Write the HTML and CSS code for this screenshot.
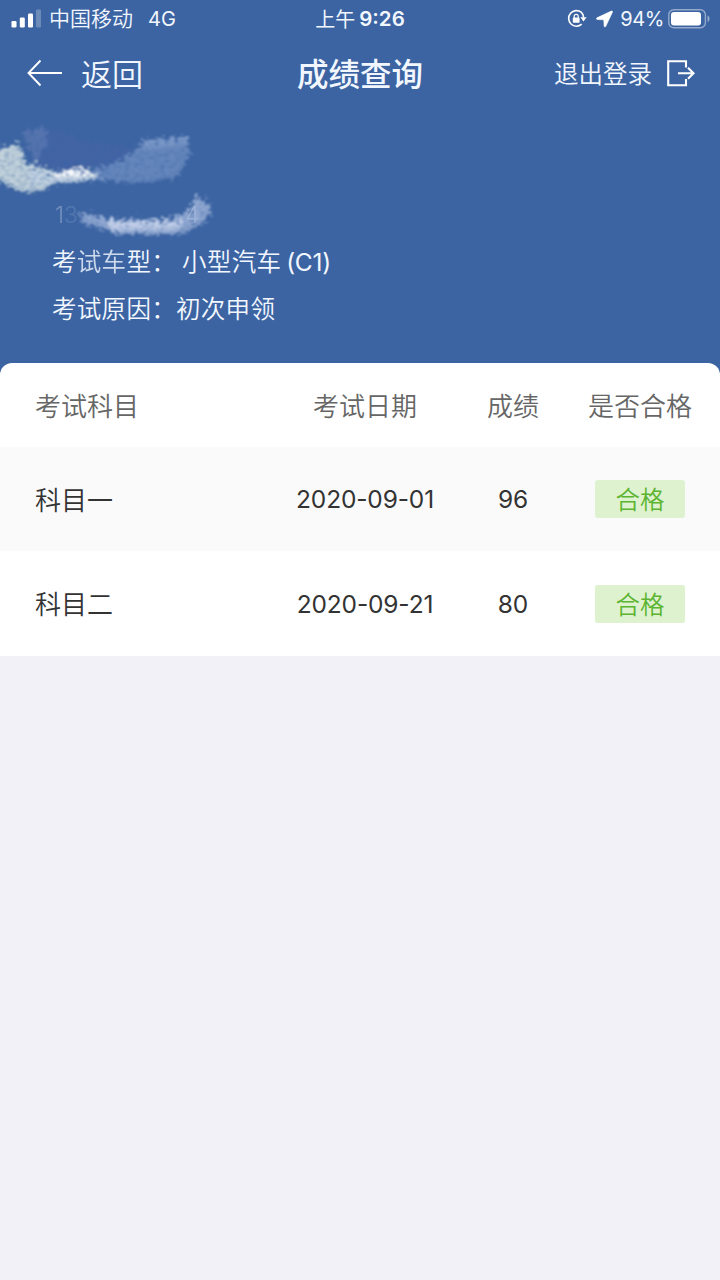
FILE: index.html
```html
<!DOCTYPE html>
<html lang="zh-CN">
<head>
    <meta charset="UTF-8">
    <meta name="viewport" content="width=device-width, initial-scale=1.0">
    <title>成绩查询</title>
    <link rel="stylesheet" href="styles.css">
</head>
<body>
    <header class="top">
        <div class="status-bar">
            <div class="status-left">
                <svg class="signal" width="30" height="19" viewBox="0 0 30 19">
                    <rect x="0.5" y="12" width="5" height="6.5" rx="1.2"/>
                    <rect x="8.8" y="8.5" width="5" height="10" rx="1.2"/>
                    <rect x="17" y="4.5" width="5" height="14" rx="1.2"/>
                    <rect x="25" y="0.5" width="5" height="18" rx="1.2" opacity="0.25"/>
                </svg>
                <span class="carrier">中国移动</span>
                <span class="network">4G</span>
            </div>
            <div class="clock"><span>上午</span><b>9:26</b></div>
            <div class="status-right">
                <!-- rotation lock -->
                <svg class="lock" width="20" height="20" viewBox="0 0 20 20">
                    <path d="M14.2 3.2A7.8 7.8 0 1 0 14.7 15.2M16.6 8.5A7.8 7.8 0 0 0 14.2 3.2" fill="none" stroke="#fff" stroke-width="1.6"/>
                    <path d="M13.4 8.2h6.2l-3.1 4.2z"/>
                    <rect x="5.8" y="8.6" width="6.8" height="5.2" rx="0.8"/>
                    <path d="M7.2 9V7.4a2 2 0 0 1 4 0V9" fill="none" stroke="#fff" stroke-width="1.2"/>
                </svg>
                <svg class="location" width="17" height="18" viewBox="0 0 17 18">
                    <path d="M15.3 1.1L1 7.8c-.9.4-.7 1.7.3 1.7l6.5.3.3 6.2c0 1.1 1.3 1.3 1.7.3L16.5 2c.3-.7-.5-1.2-1.2-.9z" stroke="#fff" stroke-width="0.6"/>
                </svg>
                <span class="percent">94%</span>
                <svg class="battery" width="43" height="20" viewBox="0 0 43 20">
                    <rect x="0.8" y="0.8" width="36.6" height="18" rx="5" fill="none" stroke="#fff" stroke-opacity="0.45" stroke-width="1.4"/>
                    <rect x="3" y="3" width="30" height="13.6" rx="3"/>
                    <path d="M39.5 6.5c2.8 1 2.8 5.6 0 6.6z" opacity="0.45"/>
                </svg>
            </div>
        </div>

        <nav class="nav-bar">
            <a href="#" class="back">
                <svg width="36" height="28" viewBox="0 0 36 28">
                    <path d="M13.5 1.5L1.5 14l12 12.5M1.5 14H35" fill="none" stroke="#fff" stroke-width="1.9"/>
                </svg>
                <span>返回</span>
            </a>
            <h1>成绩查询</h1>
            <a href="#" class="logout">
                <span>退出登录</span>
                <svg width="28" height="27" viewBox="0 0 28 27">
                    <path d="M19 7.5V1.2H1.2V25.2H19V19M11 13.2H26M21 7.7l5.5 5.5-5.5 5.5" fill="none" stroke="#fff" stroke-width="2.1"/>
                </svg>
            </a>
        </nav>

        <div class="info">
            <div class="info-id">
                <span class="digit-a">1</span><span class="digit-b">3</span><span class="digit-end">4</span>
            </div>
            <div class="info-row"><span>考<i>试车</i>型：</span><span class="value spaced">小型汽车<em>(C1)</em></span></div>
            <div class="info-row"><span>考试原因：</span><span class="value">初次申领</span></div>
        </div>

        <!-- brush marks over the name and the id number -->
        <svg class="smudge" width="240" height="140" viewBox="0 0 240 140">
            <defs>
                <filter id="brush" x="-20%" y="-30%" width="140%" height="160%">
                    <feTurbulence type="fractalNoise" baseFrequency="0.2 0.35" numOctaves="3" seed="7" result="noise"/>
                    <feDisplacementMap in="SourceGraphic" in2="noise" scale="16" xChannelSelector="R" yChannelSelector="G" result="rough"/>
                    <feColorMatrix in="noise" type="matrix" values="0 0 0 0 1  0 0 0 0 1  0 0 0 0 1  0 1.2 0 0 0.3" result="grain"/>
                    <feComposite in="rough" in2="grain" operator="in"/>
                    <feGaussianBlur stdDeviation="0.9"/>
                </filter>
            </defs>
            <g filter="url(#brush)">
                <path d="M24 24L50 22 90 36 140 42 150 58 60 64 34 58z" fill="#4763a8" opacity="0.5"/>
                <path d="M22 26l22-5 4 14-12 24z" fill="#6f87bb" opacity="0.45"/>
                <path d="M90 64C112 60 130 52 144 34l42-3 4 18-12 22-40 6-48-2z" fill="#7695c8" opacity="0.7"/>
                <path d="M144 34l44-3-3 9-44 5z" fill="#8da7d1" opacity="0.5"/>
                <path d="M-8 44l26-6 10 20 22 6 6 12-12 8-22 2-24-10-8-6z" fill="#c3d3dc"/>
                <path d="M28 62l26 5 34-4 12 9-26 4-42 3z" fill="#c2d3e2"/>
                <path d="M54 65l32-2 6 8-36 1z" fill="#fff"/>
                <path d="M78 106l30 7 56 1 24-8 8-18 16 14-8 15-24 11-62 0-36-12z" fill="#a5b9dd" opacity="0.8"/>
                <path d="M104 115h80l-6 9-66 1z" fill="#c5d1ea" opacity="0.95"/>
            </g>
        </svg>
    </header>

    <main class="results">
        <div class="row head">
            <span>考试科目</span>
            <span>考试日期</span>
            <span>成绩</span>
            <span>是否合格</span>
        </div>
        <div class="row striped">
            <span>科目一</span>
            <span class="num">2020-09-01</span>
            <span class="num">96</span>
            <span class="badge">合格</span>
        </div>
        <div class="row">
            <span>科目二</span>
            <span class="num">2020-09-21</span>
            <span class="num">80</span>
            <span class="badge">合格</span>
        </div>
    </main>
</body>
</html>
```
FILE: styles.css
```css
* {
    margin: 0;
    padding: 0;
    box-sizing: border-box;
}

body {
    min-height: 100vh;
    background: #f2f1f7;
    color: #333;
    font-family: Inter, "Noto Sans CJK SC", sans-serif;
    font-weight: 350;
}

svg {
    display: block;
    fill: #fff;
    flex-shrink: 0;
}

a {
    color: inherit;
    text-decoration: none;
}

.top {
    position: relative;
    height: 380px;
    background: #3c64a2;
    color: #f2f7ff;
}

.status-bar {
    display: grid;
    grid-template-columns: 1fr auto 1fr;
    align-items: center;
    height: 37px;
    padding: 0 9px 0 11px;
    font-size: 20px;
}

.status-left,
.status-right,
.clock {
    display: flex;
    align-items: center;
}

.status-right {
    justify-content: flex-end;
}

.carrier {
    margin-left: 8px;
    padding-bottom: 3px;
    font-size: 21px;
}

.network {
    margin-left: 15px;
    font-weight: 400;
}

.clock {
    margin-left: -2px;
}

.clock span {
    padding-bottom: 1px;
    font-weight: 400;
}

.clock b {
    margin-left: 4px;
    font-size: 20.5px;
    font-weight: 600;
}

.location {
    margin-left: 9px;
}

.percent {
    margin: 0 4px 0 7px;
    font-weight: 400;
    letter-spacing: -0.4px;
}

.nav-bar {
    display: grid;
    grid-template-columns: 1fr auto 1fr;
    align-items: center;
    height: 72px;
    padding: 0 25px 0 27px;
}

.back,
.logout {
    display: flex;
    align-items: center;
}

.back {
    font-size: 31px;
    gap: 18px;
}

.back span,
.nav-bar h1 {
    padding-bottom: 2px;
}

.nav-bar h1 {
    margin-left: -2px;
    font-size: 31.5px;
    font-weight: 500;
}

.logout {
    justify-content: flex-end;
    font-size: 24.5px;
    gap: 15px;
}

.logout span {
    padding-bottom: 1px;
}

.info {
    padding: 81px 52px 0;
    font-size: 24.5px;
}

.info-id {
    display: flex;
    height: 47px;
    line-height: 50px;
    padding-left: 3px;
    font-size: 23px;
}

.digit-a {
    opacity: 0.3;
}

.digit-b {
    opacity: 0.12;
}

.digit-end {
    margin-left: 107px;
    opacity: 0.4;
}

.info-row {
    display: flex;
    align-items: center;
    height: 47px;
    letter-spacing: 0.3px;
}

.info-row i {
    font-style: normal;
    opacity: 0.8;
}

.info-row em {
    margin-left: 5px;
    font-style: normal;
    font-weight: 400;
    letter-spacing: -0.3px;
}

.spaced {
    margin-left: 6px;
}

.smudge {
    position: absolute;
    left: 0;
    top: 106px;
}

.results {
    position: relative;
    margin-top: -17px;
    border-radius: 12px 12px 0 0;
    overflow: hidden;
    background: #fff;
}

.row {
    display: grid;
    grid-template-columns: 257px 146px 150px 104px;
    align-items: center;
    height: 105px;
    padding-left: 35px;
    font-size: 26px;
    text-align: center;
    white-space: nowrap;
}

.row > :first-child {
    padding-bottom: 2px;
    text-align: left;
}

.head {
    height: 84px;
    color: #666;
}

.head span {
    padding-bottom: 2px;
}

.striped {
    height: 104px;
    background: #fafafa;
}

.num {
    font-size: 24.5px;
    font-weight: 400;
    letter-spacing: -0.15px;
}

.badge {
    justify-self: center;
    width: 90px;
    height: 38px;
    border-radius: 3px;
    background: #dff2d0;
    color: #5cb531;
    font-size: 24.5px;
    line-height: 40px;
}
```
